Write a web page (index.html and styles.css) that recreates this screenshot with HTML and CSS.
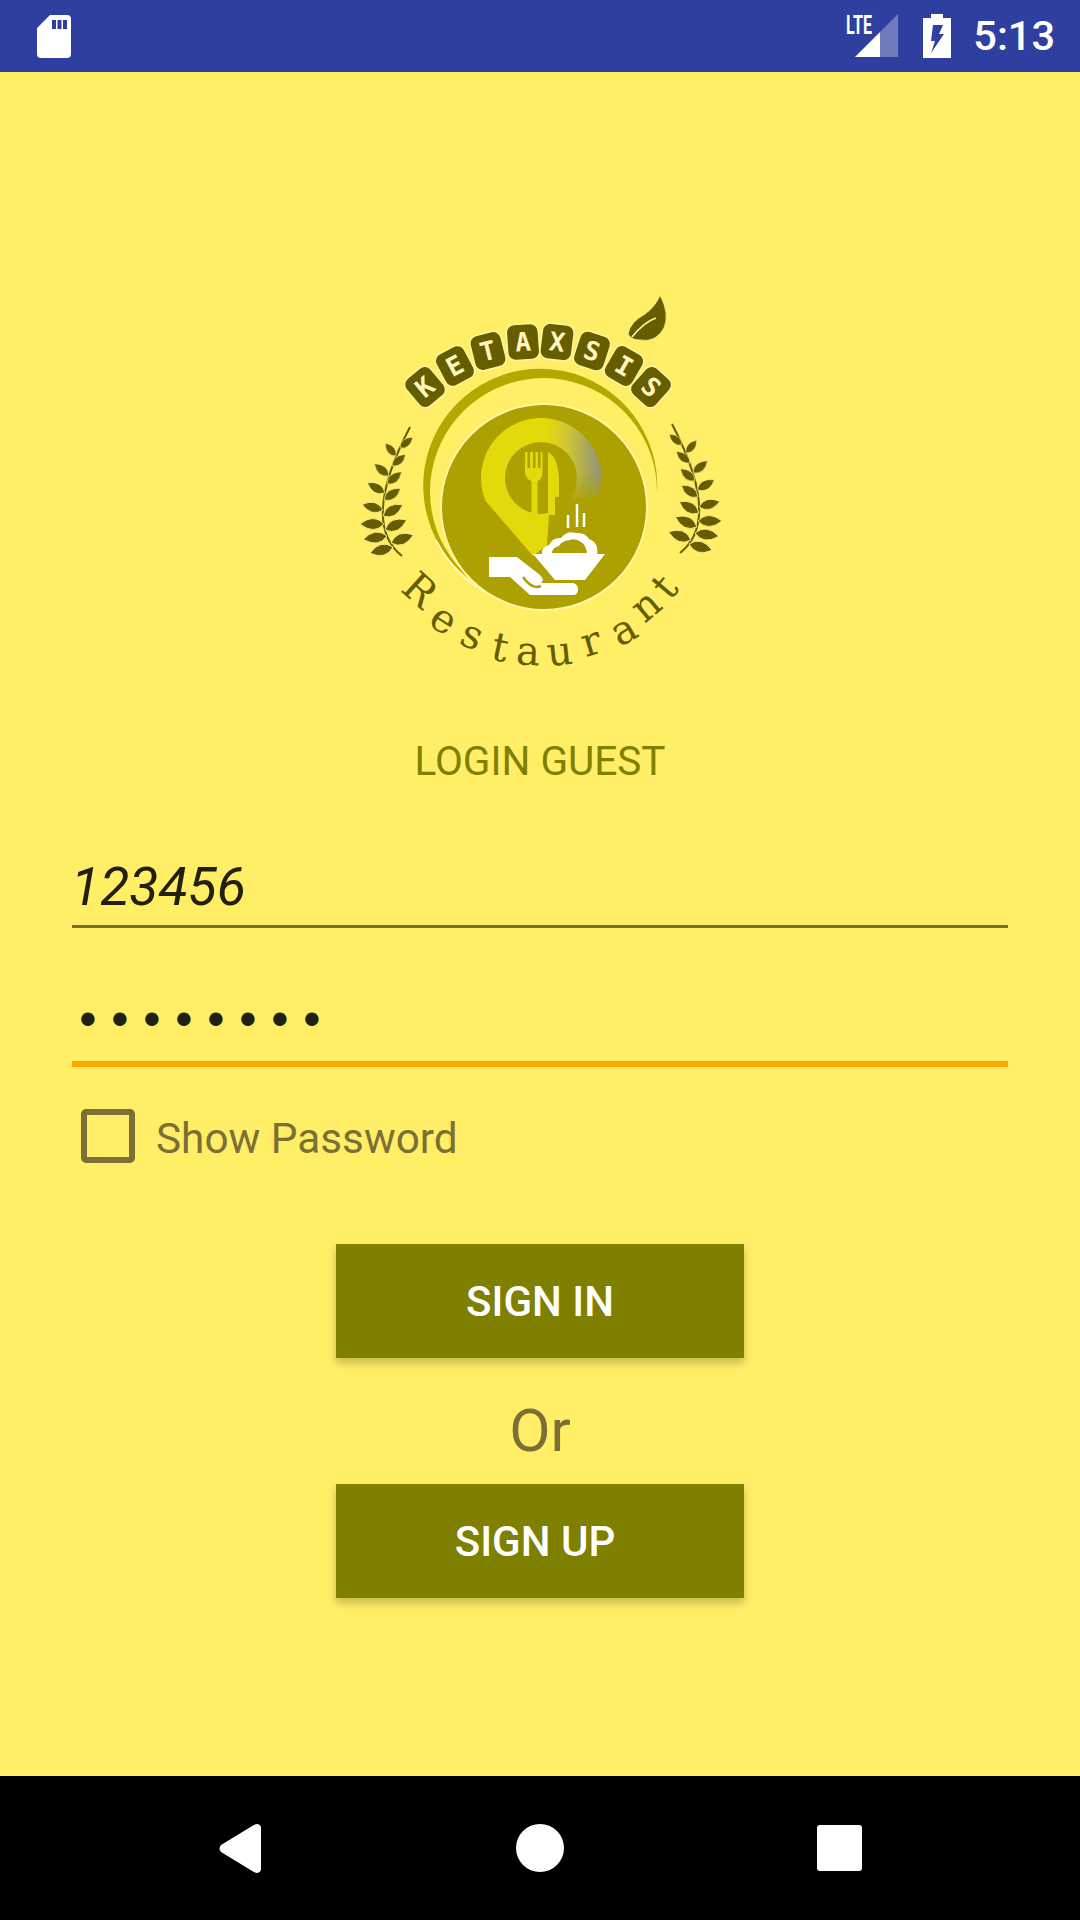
FILE: index.html
```html
<!DOCTYPE html>
<html lang="en">
<head>
    <meta charset="UTF-8">
    <title>Ketaxsis Restaurant - Login Guest</title>
    <link rel="stylesheet" href="styles.css">
</head>
<body>
    <div class="status-bar">
        <svg class="sd-icon" width="34" height="43" viewBox="37 14 34 43">
            <path class="white" fill-rule="evenodd" d="M50 14H67a4 4 0 0 1 4 4V53a4 4 0 0 1-4 4H41a4 4 0 0 1-4-4V27ZM52 19v9h4v-9ZM57.500 19v9h4v-9ZM63 19v9h4v-9Z"/>
        </svg>
        <div class="status-right">
            <svg width="52" height="62" viewBox="846 5 52 62">
                <text class="lte" x="846" y="34" textLength="26" lengthAdjust="spacingAndGlyphs">LTE</text>
                <polygon class="white" points="855,57 880,32 880,57"/>
                <polygon class="signal-rest" points="880,32 898,14 898,57 880,57"/>
            </svg>
            <svg width="28" height="44" viewBox="923 14 28 44">
                <path class="white" fill-rule="evenodd" d="M931 14h12v4h8v40h-28v-40h8ZM933 25l-2 16h4l-4 12 13-19h-5l4-9Z"/>
            </svg>
            <span class="clock">5:13</span>
        </div>
    </div>

    <main class="login">
        <svg class="logo" width="400" height="420" viewBox="340 280 400 420">
            <defs>
                <path id="leaf" d="M0 0Q10-11 24 0Q10 11 0 0Z"/>
                <linearGradient id="pin-fade" x1="481" y1="0" x2="602" y2="0" gradientUnits="userSpaceOnUse">
                    <stop offset="0" stop-color="#e4d90b"/>
                    <stop offset="0.55" stop-color="#e4d90b"/>
                    <stop offset="0.72" stop-color="#cfc538"/>
                    <stop offset="0.88" stop-color="#a8a65a"/>
                    <stop offset="1" stop-color="#8f9184"/>
                </linearGradient>
                <linearGradient id="pin-cover" x1="0" y1="472" x2="0" y2="506" gradientUnits="userSpaceOnUse">
                    <stop offset="0" stop-color="#aca100" stop-opacity="0"/>
                    <stop offset="1" stop-color="#aca100"/>
                </linearGradient>
                <g id="laurel">
                    <path class="stem" d="M402 556Q360 523 410 427"/>
                    <use class="leaf" href="#leaf" transform="translate(393 547) rotate(165)"/>
                    <use class="leaf" href="#leaf" transform="translate(387 536) rotate(172)"/>
                    <use class="leaf" href="#leaf" transform="translate(384 524) rotate(180)"/>
                    <use class="leaf" href="#leaf" transform="translate(383 510) rotate(195) scale(.9)"/>
                    <use class="leaf" href="#leaf" transform="translate(385 493) rotate(210) scale(.85)"/>
                    <use class="leaf" href="#leaf" transform="translate(389 476) rotate(220) scale(.8)"/>
                    <use class="leaf" href="#leaf" transform="translate(396 456) rotate(230) scale(.7)"/>
                    <use class="leaf" href="#leaf" transform="translate(391 543) rotate(-20)"/>
                    <use class="leaf" href="#leaf" transform="translate(385 530) rotate(-25)"/>
                    <use class="leaf" href="#leaf" transform="translate(383 516) rotate(-30) scale(.95)"/>
                    <use class="leaf" href="#leaf" transform="translate(384 500) rotate(-35) scale(.85)"/>
                    <use class="leaf" href="#leaf" transform="translate(387 484) rotate(-40) scale(.8)"/>
                    <use class="leaf" href="#leaf" transform="translate(392 466) rotate(-40) scale(.75)"/>
                    <use class="leaf" href="#leaf" transform="translate(400 448) rotate(-40) scale(.7)"/>
                </g>
            </defs>

            <use href="#laurel"/>
            <use href="#laurel" transform="translate(1082 -3) scale(-1 1)"/>

            <path class="ring" d="M487 590A117 117 0 1 1 657 493A113.500 113.500 0 1 0 487 590Z"/>
            <path class="streak" d="M436 540Q456 578 486 592"/>
            <circle class="disc" cx="544" cy="507" r="103"/>

            <path fill="url(#pin-fade)" d="M533 556L485.600 501A60 60 0 1 1 598 496.700L570 499L549 515L547 545Z"/>
            <rect fill="url(#pin-cover)" x="562" y="472" width="42" height="36"/>
            <circle class="disc-plain" cx="541" cy="478" r="36"/>
            <path class="pin-yellow" d="M525 452h2.500v16h2.500v-16h3v16h2.500v-16h2.500v16h2.500v-16h2v20q0 7-5 9v34h-6v-34q-6-2-6.500-9Z"/>
            <path class="pin-yellow" d="M548 452Q559 458 559 482V497H555V515H548Z"/>

            <path class="white" d="M533 554H605L585 580H555Z"/>
            <path class="white" d="M542 554Q541 547 549 545Q553 537 561 538Q567 530 576 533Q585 532 589 539Q597 542 597 549Q598 552 597 554Z"/>
            <path class="disc-plain" d="M552 553Q552 549 556 547Q560 546 561 543Q566 540 570 540Q575 538 581 542Q586 545 587 553Z"/>
            <path class="steam" d="M568 515V528M577 504V527M584 513V527"/>
            <path class="white" d="M489 557H517L540 575Q545 580 541 583H573Q578 584 578 589Q578 595 573 595H530L510 577H489Z"/>
            <path class="slit" d="M523 577Q532 590 541 586"/>

            <path class="big-leaf" d="M628 334Q630 322 645 314Q656 306 660 295Q670 314 664 328Q656 343 640 340Q631 340 628 334Z"/>
            <path class="vein" d="M632 337Q644 322 656 318"/>

            <g class="tile" transform="translate(425 387) rotate(-40)"><rect x="-16" y="-18" width="32" height="36" rx="8"/><text y="9">K</text></g>
            <g class="tile" transform="translate(455 366) rotate(-28)"><rect x="-16" y="-18" width="32" height="36" rx="8"/><text y="9">E</text></g>
            <g class="tile" transform="translate(488 351) rotate(-14)"><rect x="-16" y="-18" width="32" height="36" rx="8"/><text y="9">T</text></g>
            <g class="tile" transform="translate(523 342) rotate(-4)"><rect x="-16" y="-18" width="32" height="36" rx="8"/><text y="9">A</text></g>
            <g class="tile" transform="translate(557 342) rotate(7)"><rect x="-16" y="-18" width="32" height="36" rx="8"/><text y="9">X</text></g>
            <g class="tile" transform="translate(592 351) rotate(18)"><rect x="-16" y="-18" width="32" height="36" rx="8"/><text y="9">S</text></g>
            <g class="tile" transform="translate(624 366) rotate(30)"><rect x="-16" y="-18" width="32" height="36" rx="8"/><text y="9">I</text></g>
            <g class="tile" transform="translate(651 387) rotate(42)"><rect x="-16" y="-18" width="32" height="36" rx="8"/><text y="9">S</text></g>

            <text class="logo-letter" transform="translate(420 590) rotate(42)" y="14">R</text>
            <text class="logo-letter" transform="translate(442 622) rotate(32)" y="10">e</text>
            <text class="logo-letter" transform="translate(471 638) rotate(22)" y="10">s</text>
            <text class="logo-letter" transform="translate(500 648) rotate(12)" y="13">t</text>
            <text class="logo-letter" transform="translate(528 655) rotate(3)" y="10">a</text>
            <text class="logo-letter" transform="translate(560 655) rotate(-6)" y="10">u</text>
            <text class="logo-letter" transform="translate(592 645) rotate(-17)" y="10">r</text>
            <text class="logo-letter" transform="translate(625 633) rotate(-30)" y="10">a</text>
            <text class="logo-letter" transform="translate(648 608) rotate(-40)" y="10">n</text>
            <text class="logo-letter" transform="translate(665 587) rotate(-50)" y="13">t</text>
        </svg>

        <h1 class="login-title">LOGIN GUEST</h1>

        <div class="field"><span class="field-text">123456</span></div>
        <div class="field field-active"><span class="dots">••••••••</span></div>

        <div class="show-password">
            <span class="checkbox"></span>
            <span class="show-label">Show Password</span>
        </div>

        <button class="btn btn-first" type="button">SIGN IN</button>
        <div class="or">Or</div>
        <button class="btn btn-up" type="button">SIGN UP</button>
    </main>

    <div class="nav-bar">
        <svg width="46" height="53" viewBox="-2 -2 46 53">
            <path class="white" d="M34 1.500Q40-2 42 3V46Q40 51 34 47.500L2 28Q-1 24.500 2 21Z"/>
        </svg>
        <span class="nav-home"></span>
        <span class="nav-recent"></span>
    </div>
</body>
</html>
```

FILE: styles.css
```css
* {
    margin: 0;
    padding: 0;
    box-sizing: border-box;
}

body {
    font-family: 'Roboto', sans-serif;
    background: #ffee66;
    width: 1080px;
    height: 1920px;
    display: flex;
    flex-direction: column;
    overflow: hidden;
}

/* status bar */
.status-bar {
    height: 72px;
    background: #2e3f9f;
    display: flex;
    align-items: center;
    justify-content: space-between;
    padding: 0 25px 0 37px;
}

.status-right {
    display: flex;
    align-items: center;
    gap: 25px;
}

.white {
    fill: #fff;
}

.signal-rest {
    fill: #717bbb;
}

.lte {
    font-family: 'Roboto', sans-serif;
    font-weight: 700;
    font-size: 26px;
    fill: #fff;
}

.clock {
    color: #fff;
    font-size: 41.5px;
    font-weight: 500;
    line-height: 72px;
    margin-left: -3px;
}

/* form */
.login {
    flex: 1;
    display: flex;
    flex-direction: column;
    align-items: center;
    padding: 208px 72px 0;
}

.logo {
    display: block;
    flex-shrink: 0;
}

.login-title {
    font-size: 40.5px;
    font-weight: 400;
    line-height: 50px;
    color: #808000;
    margin-top: 36px;
}

.field {
    width: 100%;
    height: 76px;
    margin-top: 66px;
    border-bottom: 3px solid #786f33;
    font-size: 53.5px;
    font-style: italic;
    line-height: 70px;
    color: #222010;
}

.field-text {
    margin-left: -1px;
}

.field-active {
    height: 83px;
    margin-top: 56px;
    padding-left: 2px;
    border-bottom: 6px solid #ffa500;
    line-height: 70px;
}

.dots {
    font-family: 'DejaVu Sans Mono', monospace;
    font-style: normal;
    font-size: 46px;
    letter-spacing: 4.3px;
}

.show-password {
    width: 100%;
    height: 54px;
    display: flex;
    align-items: center;
    gap: 21px;
    margin-top: 42px;
    padding-left: 9px;
    font-size: 42.3px;
    color: #7a7036;
}

.show-label {
    line-height: 44px;
    padding-top: 6px;
}

.checkbox {
    width: 54px;
    height: 54px;
    border: 6px solid #7a7036;
    border-radius: 5px;
}

.btn {
    width: 408px;
    height: 114px;
    flex-shrink: 0;
    background: #808000;
    border: none;
    color: #fff;
    font-family: 'Roboto', sans-serif;
    font-weight: 500;
    font-size: 42px;
    box-shadow: 0 5px 8px rgba(0, 0, 0, 0.22);
}

.btn-first {
    margin-top: 81px;
}

.btn-up {
    padding-right: 10px;
}

.or {
    font-size: 60px;
    line-height: 70px;
    height: 126px;
    padding-top: 38px;
    color: #7a7036;
}

/* nav bar */
.nav-bar {
    height: 144px;
    background: #000;
    display: flex;
    align-items: center;
    justify-content: space-between;
    padding: 0 218px 0 217px;
}

.nav-home {
    width: 48px;
    height: 48px;
    border-radius: 50%;
    background: #fff;
}

.nav-recent {
    width: 45px;
    height: 46px;
    border-radius: 3px;
    background: #fff;
}

/* logo parts */
.ring {
    fill: #b3a800;
}

.streak {
    fill: none;
    stroke: #fffbd0;
    stroke-width: 1.5;
}

.disc {
    fill: #aca100;
    stroke: #fff6a0;
    stroke-width: 2;
}

.disc-plain {
    fill: #aca100;
}

.pin-yellow {
    fill: #e4d90b;
}

.steam {
    fill: none;
    stroke: #fff;
    stroke-width: 2.5;
}

.slit {
    fill: none;
    stroke: #aca100;
    stroke-width: 2.5;
}

.stem {
    fill: none;
    stroke: #665d00;
    stroke-width: 2;
}

.leaf, .big-leaf {
    fill: #665d00;
    stroke: #fff6a0;
    stroke-width: 0.8;
}

.vein {
    fill: none;
    stroke: #fff6a0;
    stroke-width: 1.5;
}

.tile rect {
    fill: #665d00;
    stroke: #fff6a0;
    stroke-width: 1.5;
}

.tile text {
    font-family: 'DejaVu Sans Mono', monospace;
    font-weight: 700;
    font-size: 26px;
    fill: #fff6c0;
    text-anchor: middle;
}

.logo-letter {
    font-family: 'DejaVu Serif', serif;
    font-size: 40px;
    fill: #665d00;
    text-anchor: middle;
}
```
